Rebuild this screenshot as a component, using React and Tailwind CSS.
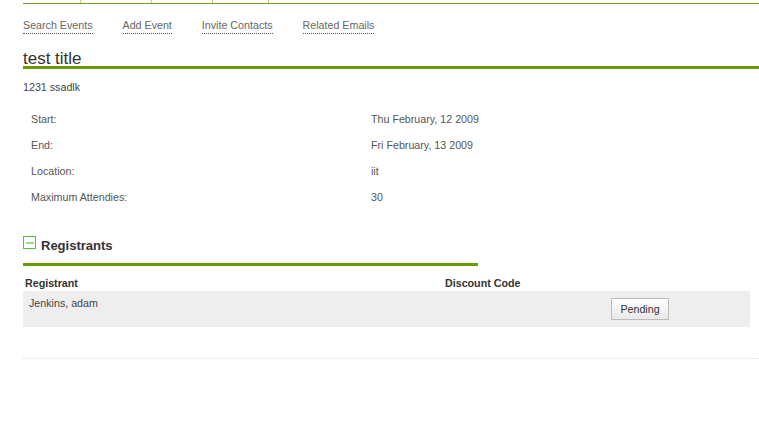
import React from 'react'

const LINKS = ['Search Events', 'Add Event', 'Invite Contacts', 'Related Emails']

const DETAILS = [
  ['Start:', 'Thu February, 12 2009'],
  ['End:', 'Fri February, 13 2009'],
  ['Location:', 'iit'],
  ['Maximum Attendies:', '30'],
]

export default function App() {
  return (
    <div className="min-h-screen bg-white text-[#444] pl-[23px]" style={{ fontFamily: '"Liberation Sans", Arial, sans-serif' }}>
      {/* top tabs remnant */}
      <div className="flex h-[4px] border-b border-[#6f9a2a]">
        <div className="w-[58px] border-r border-dotted border-[#9ab84a]" />
        <div className="w-[71px] border-r border-dotted border-[#9ab84a]" />
        <div className="w-[61px] border-r border-dotted border-[#9ab84a]" />
        <div className="w-[56px] border-r border-dotted border-[#9ab84a]" />
      </div>

      {/* sub navigation */}
      <div className="flex gap-[30px] mt-[15px] text-[10.7px] leading-[13px] text-[#666]">
        {LINKS.map(l => (
          <span key={l} className="border-b border-dotted border-[#555] pb-[1px]">{l}</span>
        ))}
      </div>

      {/* title */}
      <h1 className="mt-[17px] text-[17px] leading-[15px] text-[#333]">test title</h1>
      <div className="h-[3px] bg-[#6a9c00]" />

      <p className="mt-[12px] text-[10.7px] leading-[13px] text-[#444]">1231 ssadlk</p>

      {/* details */}
      <div className="mt-[12px] text-[10.7px] leading-[13px] text-[#555]">
        {DETAILS.map(([k, v]) => (
          <div key={k} className="flex h-[26px] items-center">
            <span className="w-[348px] pl-[8px]">{k}</span>
            <span>{v}</span>
          </div>
        ))}
      </div>

      {/* registrants */}
      <div className="flex items-start mt-[26px] h-[13px]">
        <div className="w-[13px] h-[13px] border border-[#44cc33] flex items-center justify-center">
          <div className="w-[8px] h-[2px] bg-[#99dd88]" />
        </div>
        <span className="ml-[5px] mt-[3px] text-[13px] leading-[13px] font-bold text-[#333]">Registrants</span>
      </div>
      <div className="mt-[14px] h-[3px] w-[455px] bg-[#6a9c00]" />

      <div className="w-[727px] mt-[11px] text-[10.7px] leading-[13px]">
        <div className="flex font-bold text-[#333] h-[14px]">
          <span className="w-[422px] pl-[2px]">Registrant</span>
          <span>Discount Code</span>
        </div>
        <div className="flex bg-[#eeeeee] h-[36px]">
          <span className="w-[588px] pl-[6px] pt-[6px] text-[#444]">Jenkins, adam</span>
          <div className="pt-[7px]">
            <button className="w-[58px] h-[22px] border border-[#bbb] bg-gradient-to-b from-white to-[#e8e8e8] text-[10.7px] text-[#333]">
              Pending
            </button>
          </div>
        </div>
      </div>

      <div className="mt-[31px] border-b border-dotted border-[#dde0dd]" />
    </div>
  )
}
